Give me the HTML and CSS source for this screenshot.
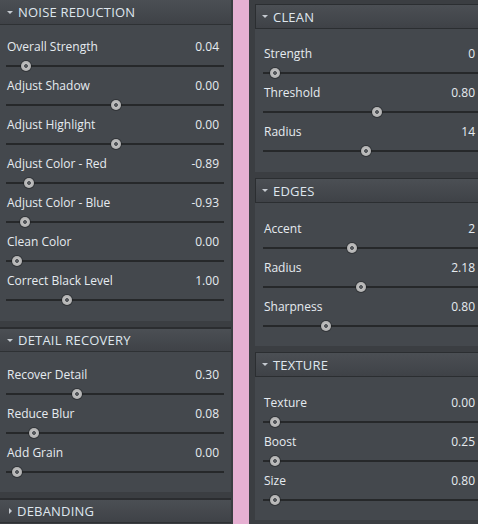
FILE: index.html
```html
<!DOCTYPE html>
<html lang="en">

<head>
  <meta charset="UTF-8" />
  <title>Filter Settings</title>
  <link rel="stylesheet" href="styles.css">
</head>

<body>
  <div class="col col-left">
    <div class="section">
      <div class="head"><span class="arrow down"></span>NOISE REDUCTION</div>
      <div class="body">
        <div class="row"><div class="line"><span>Overall Strength</span><span>0.04</span></div><div class="track"><span class="thumb" style="left: 20px"></span></div></div>
        <div class="row"><div class="line"><span>Adjust Shadow</span><span>0.00</span></div><div class="track"><span class="thumb" style="left: 110px"></span></div></div>
        <div class="row"><div class="line"><span>Adjust Highlight</span><span>0.00</span></div><div class="track"><span class="thumb" style="left: 110px"></span></div></div>
        <div class="row"><div class="line"><span>Adjust Color - Red</span><span>-0.89</span></div><div class="track"><span class="thumb" style="left: 23px"></span></div></div>
        <div class="row"><div class="line"><span>Adjust Color - Blue</span><span>-0.93</span></div><div class="track"><span class="thumb" style="left: 19px"></span></div></div>
        <div class="row"><div class="line"><span>Clean Color</span><span>0.00</span></div><div class="track"><span class="thumb" style="left: 11px"></span></div></div>
        <div class="row"><div class="line"><span>Correct Black Level</span><span>1.00</span></div><div class="track"><span class="thumb" style="left: 61px"></span></div></div>
      </div>
    </div>
    <div class="section">
      <div class="head"><span class="arrow down"></span>DETAIL RECOVERY</div>
      <div class="body">
        <div class="row"><div class="line"><span>Recover Detail</span><span>0.30</span></div><div class="track"><span class="thumb" style="left: 71px"></span></div></div>
        <div class="row"><div class="line"><span>Reduce Blur</span><span>0.08</span></div><div class="track"><span class="thumb" style="left: 28px"></span></div></div>
        <div class="row"><div class="line"><span>Add Grain</span><span>0.00</span></div><div class="track"><span class="thumb" style="left: 11px"></span></div></div>
      </div>
    </div>
    <div class="section">
      <div class="head"><span class="arrow right"></span>DEBANDING</div>
    </div>
  </div>

  <div class="pink"></div>

  <div class="col col-right">
    <div class="section">
      <div class="head"><span class="arrow down"></span>CLEAN</div>
      <div class="body first">
        <div class="row"><div class="line"><span>Strength</span><span>0</span></div><div class="track"><span class="thumb" style="left: 12px"></span></div></div>
        <div class="row"><div class="line"><span>Threshold</span><span>0.80</span></div><div class="track"><span class="thumb" style="left: 114px"></span></div></div>
        <div class="row"><div class="line"><span>Radius</span><span>14</span></div><div class="track"><span class="thumb" style="left: 103px"></span></div></div>
      </div>
    </div>
    <div class="section">
      <div class="head"><span class="arrow down"></span>EDGES</div>
      <div class="body">
        <div class="row"><div class="line"><span>Accent</span><span>2</span></div><div class="track"><span class="thumb" style="left: 89px"></span></div></div>
        <div class="row"><div class="line"><span>Radius</span><span>2.18</span></div><div class="track"><span class="thumb" style="left: 98px"></span></div></div>
        <div class="row"><div class="line"><span>Sharpness</span><span>0.80</span></div><div class="track"><span class="thumb" style="left: 63px"></span></div></div>
      </div>
    </div>
    <div class="section">
      <div class="head"><span class="arrow down"></span>TEXTURE</div>
      <div class="body">
        <div class="row"><div class="line"><span>Texture</span><span>0.00</span></div><div class="track"><span class="thumb" style="left: 12px"></span></div></div>
        <div class="row"><div class="line"><span>Boost</span><span>0.25</span></div><div class="track"><span class="thumb" style="left: 12px"></span></div></div>
        <div class="row"><div class="line"><span>Size</span><span>0.80</span></div><div class="track"><span class="thumb" style="left: 12px"></span></div></div>
      </div>
    </div>
  </div>
</body>

</html>
```

FILE: styles.css
```css
* {
  margin: 0;
  padding: 0;
  box-sizing: border-box;
}

body {
  display: flex;
  width: 478px;
  height: 524px;
  overflow: hidden;
  background: #3b3e42;
  font-family: 'Open Sans', sans-serif;
  font-size: 12px;
  color: #e6ebf0;
}

.col {
  display: flex;
  flex-direction: column;
}

.col-left {
  width: 233px;
  flex: none;
  border-right: 2px solid #393c40;
  background: #3b3e42;
}

.pink {
  width: 16px;
  flex: none;
  background: #e6b0d2;
}

.col-right {
  flex: 1;
  min-width: 0;
  padding: 4px 0 0 6px;
  overflow: hidden;
}

.col-right .section {
  width: 230px;
  flex: none;
  margin-bottom: 6px;
}

.head {
  height: 25px;
  display: flex;
  align-items: center;
  padding-left: 7px;
  font-size: 13px;
  letter-spacing: 0.2px;
  color: #dfe6ee;
  background: linear-gradient(#4b4f54, #3f4247);
  border-bottom: 1px solid #2e3134;
}

.col-right .head {
  border: 1px solid #2b2e31;
  border-right: none;
  padding-left: 6px;
}

.col-left .section + .section .head {
  border-top: 2px solid #2b2d30;
  margin-top: 6px;
}

.arrow {
  width: 0;
  height: 0;
  margin-right: 5px;
}

.arrow.down {
  border-left: 3px solid transparent;
  border-right: 3px solid transparent;
  border-top: 3px solid #c5cad0;
}

.arrow.right {
  border-top: 3px solid transparent;
  border-bottom: 3px solid transparent;
  border-left: 3px solid #c5cad0;
  margin-left: 2px;
}

.body {
  background: #44484d;
  padding: 13px 7px 10px 6px;
}

.col-left .section + .section .body {
  padding-top: 14px;
  padding-bottom: 9px;
}

.col-right .body {
  padding: 17px 0 9px 8px;
}

.col-right .body.first {
  padding-top: 16px;
  padding-bottom: 10px;
}

.row {
  height: 39px;
}

.line {
  display: flex;
  justify-content: space-between;
  height: 18px;
  line-height: 18px;
  padding: 0 5px 0 1px;
}

.col-right .line {
  padding-right: 10px;
}

.track {
  position: relative;
  height: 2px;
  margin-top: 9px;
  background: #26282a;
}

.thumb {
  position: absolute;
  top: -4px;
  width: 10px;
  height: 10px;
  margin-left: -5px;
  border-radius: 50%;
  background: radial-gradient(circle, #55585c 0 1.6px, #c0c0c0 2.2px, #a5a5a5 100%);
  box-shadow: 0 0 0 1px rgba(30, 32, 34, 0.5);
}
```
